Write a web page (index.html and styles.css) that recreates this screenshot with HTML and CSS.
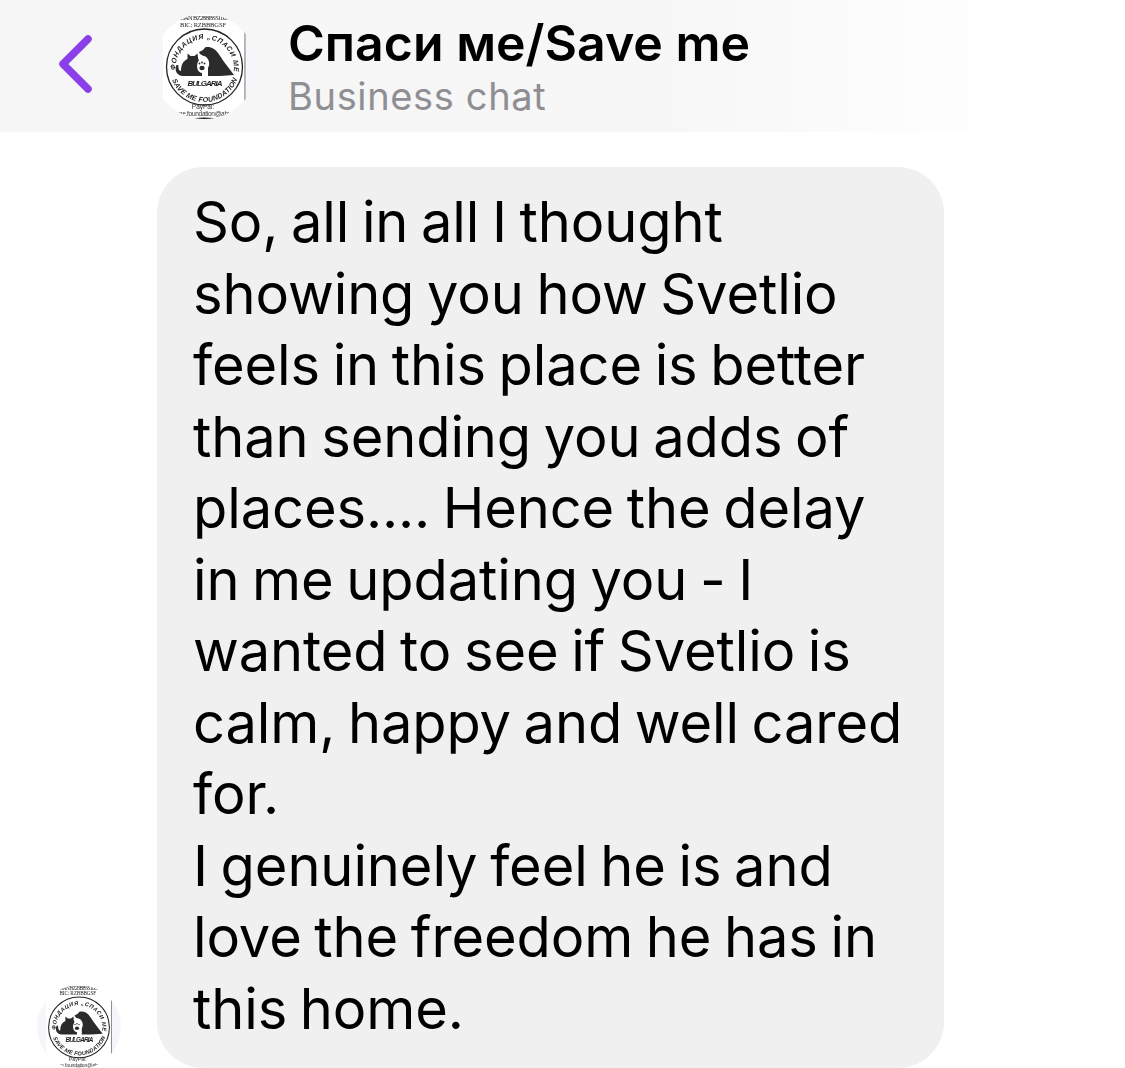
FILE: index.html
```html
<!DOCTYPE html>
<html lang="en">
<head>
    <meta charset="utf-8">
    <title>Спаси ме/Save me</title>
    <link rel="stylesheet" href="styles.css">
</head>
<body>
    <svg class="defs" width="0" height="0">
        <defs>
            <symbol id="logo" viewBox="0 0 105 105">
                <rect x="11" y="0" width="82" height="105" fill="#ffffff"/>
                <rect x="92.5" y="18" width="0.9" height="69" fill="#666666"/>
                <text x="52" y="6" class="logo-small" text-anchor="middle" textLength="50">IBAN BZ28BBSS1008</text>
                <text x="51" y="12.5" class="logo-small" text-anchor="middle" textLength="46">BIC: RZBBBGSF</text>
                <circle cx="52.5" cy="53" r="38" fill="none" stroke="#222222" stroke-width="1.3"/>
                <path id="arcTop" d="M23.5 56 A29.2 29.2 0 1 1 81.6 58" fill="none"/>
                <path id="arcBottom" d="M20 66 A35 35 0 0 0 85 66" fill="none"/>
                <text class="logo-ring"><textPath href="#arcTop" textLength="101">ФОНДАЦИЯ „СПАСИ МЕ“</textPath></text>
                <text class="logo-ring"><textPath href="#arcBottom" textLength="84">SAVE ME FOUNDATION</textPath></text>
                <text x="53" y="71.5" class="logo-name" text-anchor="middle" textLength="35">BULGARIA</text>
                <path d="M24.5 51 C22 56 25 62 31 62 L50 62 L50 56 C49 50 47 47 46 44 L45.5 39.5 L42.5 42 L38.5 42 L35.5 39.5 L35.5 45 C31 47 29 51 29 57 C27 57 26 54 26.5 51 Z" fill="#2b2b2b"/>
                <path d="M47 38 L51 36 L53 33.5 C58 32 63 35 66 39 C69 43 71 47 76 53 L82 61 L68 62 L56 62 L56 54 C59 49 56 43 52 42 C50 41 48 41 47 38 Z" fill="#2b2b2b"/>
                <ellipse cx="50" cy="52" rx="5" ry="7" fill="#ffffff"/>
                <ellipse cx="50" cy="54" rx="2.6" ry="2.2" fill="#2b2b2b"/>
                <circle cx="47.5" cy="49.5" r="0.9" fill="#2b2b2b"/>
                <circle cx="50" cy="48.5" r="0.9" fill="#2b2b2b"/>
                <circle cx="52.5" cy="49.5" r="0.9" fill="#2b2b2b"/>
                <text x="51" y="95" class="logo-pay" text-anchor="middle">PayPal:</text>
                <text x="52" y="102" class="logo-pay" text-anchor="middle" textLength="54">me.foundation@abv</text>
                <ellipse cx="52" cy="105" rx="13" ry="1.5" fill="#222222"/>
            </symbol>
        </defs>
    </svg>

    <header class="chat-header">
        <button class="back-btn" aria-label="Back">
            <svg width="36" height="60" viewBox="0 0 36 60">
                <path d="M31 5 L6 30 L31 55" fill="none" stroke="#8b3fe8" stroke-width="7.5" stroke-linecap="round" stroke-linejoin="round"/>
            </svg>
        </button>
        <div class="avatar avatar-large">
            <svg class="avatar-logo"><use href="#logo"/></svg>
        </div>
        <div class="chat-title">
            <div class="chat-name">Спаси ме/Save me</div>
            <div class="chat-sub">Business chat</div>
        </div>
    </header>

    <main class="message-row">
        <div class="avatar avatar-small">
            <svg class="avatar-logo"><use href="#logo"/></svg>
        </div>
        <div class="bubble">So, all in all I thought<br>showing you how Svetlio<br>feels in this place is better<br>than sending you adds of<br>places.... Hence the delay<br>in me updating you - I<br>wanted to see if Svetlio is<br>calm, happy and well cared<br>for.<br>I genuinely feel he is and<br>love the freedom he has in<br>this home.</div>
    </main>
</body>
</html>
```

FILE: styles.css
```css
html, body {
    margin: 0;
    height: 1068px;
    overflow: hidden;
    background-color: #ffffff;
    font-family: "Inter", "Liberation Sans", sans-serif;
    color: #000000;
}

.defs {
    display: block;
    height: 0;
}

.chat-header {
    height: 132px;
    display: flex;
    align-items: center;
    padding-left: 57px;
    background: linear-gradient(90deg, #f6f6f6 0%, #f7f7f7 60%, #ffffff 90%);
}

.back-btn {
    width: 36px;
    height: 60px;
    padding: 0;
    border: 0;
    background: none;
    margin-right: 59px;
    margin-top: -4px;
}

.avatar {
    border-radius: 50%;
    background-color: #f6f6fa;
    overflow: hidden;
    flex-shrink: 0;
}

.avatar-logo {
    display: block;
    width: 100%;
    height: 100%;
    filter: blur(0.4px);
}

.avatar-large {
    width: 105px;
    height: 105px;
    margin-right: 31px;
}

.avatar-small {
    width: 84px;
    height: 84px;
    margin-left: 37px;
    margin-right: 36px;
    margin-bottom: -1px;
}

.chat-title {
    margin-top: 4px;
}

.chat-name {
    font-size: 50px;
    font-weight: 600;
    line-height: 56px;
    letter-spacing: 0;
    white-space: nowrap;
}

.chat-sub {
    font-size: 38px;
    line-height: 50px;
    letter-spacing: 0.65px;
    color: #8e8e93;
    white-space: nowrap;
}

.message-row {
    display: flex;
    align-items: flex-end;
    padding-top: 35px;
}

.bubble {
    width: 787px;
    height: 901px;
    box-sizing: border-box;
    padding: 20px 0 0 36px;
    background-color: #f0f0f0;
    border-radius: 46px;
    font-size: 56px;
    line-height: 71.5px;
    letter-spacing: -0.1px;
    word-spacing: -3px;
    white-space: nowrap;
}

.logo-small {
    font-family: "Liberation Serif", serif;
    font-size: 6.5px;
    fill: #222222;
}

.logo-ring {
    font-family: "Liberation Sans", sans-serif;
    font-size: 7px;
    font-weight: 700;
    font-style: italic;
    fill: #222222;
}

.logo-name {
    font-family: "Liberation Sans", sans-serif;
    font-size: 8px;
    font-weight: 700;
    font-style: italic;
    fill: #222222;
}

.logo-pay {
    font-family: "Liberation Sans", sans-serif;
    font-size: 6.5px;
    fill: #333333;
}
```
